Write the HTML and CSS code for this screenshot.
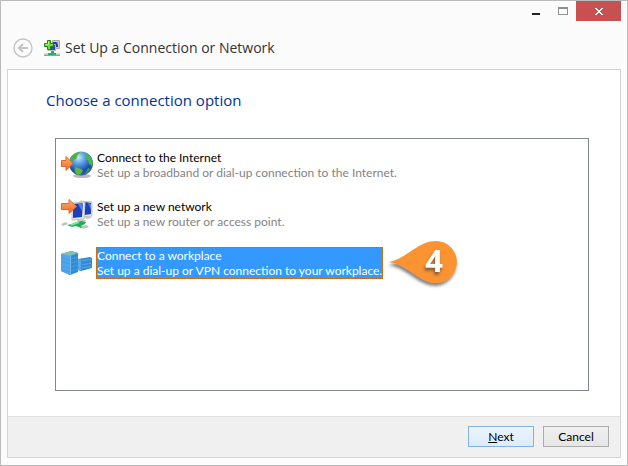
FILE: index.html
```html
<!DOCTYPE html>
<html lang="en">
<head>
<meta charset="utf-8">
<title>Set Up a Connection or Network</title>
<link rel="stylesheet" href="styles.css">
</head>
<body>
<div class="window">
  <div class="caption">
    <button class="cap minimize" aria-label="Minimize"><svg width="8" height="3"><path d="M0 0h8v2H0z" fill="#222"/></svg></button>
    <button class="cap maximize" aria-label="Maximize"><svg width="10" height="8"><path d="M0 0h10v8H0zM1 2v5h8V2z" fill="#909090" fill-rule="evenodd"/></svg></button>
    <button class="cap close" aria-label="Close"><svg width="8" height="7" shape-rendering="crispEdges"><path d="M0 0h2v1h1v1h2V1h1V0h2v1H7v1H6v1H5v1h1v1h1v1h1v1H6V6H5V5H3v1H2v1H0V6h1V5h1V4h1V3H2V2H1V1H0z" fill="#fff"/></svg></button>
  </div>
  <header class="title">
    <button class="back" aria-label="Back"><svg width="20" height="20" viewBox="0 0 20 20" fill="none" stroke="#c3c3c3"><circle cx="10" cy="10" r="9" stroke-width="1.4"/><path d="M15 10H6M10 6l-4 4 4 4" stroke-width="2"/></svg></button>
    <svg class="app-icon" width="16" height="16" viewBox="0 0 16 16">
      <path d="M8.500.500h7v8h-7z" fill="#c9d0cf" stroke="#a4a9a7"/>
      <path d="M9 2h5v5H9z" fill="#3037ae"/><path d="M12 2h2v3z" fill="#798ced"/>
      <path d="M4.500 4.500h7v6h-7z" fill="#304db5" stroke="#b5bdbb"/>
      <path d="M7 11h3v2h2v2H4v-2h3z" fill="#19b477"/><path d="M0 13.500h4v2H0zM12 13.500h4v2h-4z" fill="#b7c8bd"/><path d="M0 15h16v1H0z" fill="#62be91"/>
      <path d="M3.500.500h3v3h3v3h-3v3h-3v-3h-3v-3h3z" fill="#70e02c" stroke="#16851c"/><path d="M4.500 1.500v3h-3" fill="none" stroke="#b6f566"/>
    </svg>
    <h1>Set Up a Connection or Network</h1>
  </header>
  <main class="client">
    <section class="content">
      <h2>Choose a connection option</h2>
      <div class="options">
        <button class="option">
          <svg width="32" height="28" viewBox="0 0 32 28">
            <defs>
              <radialGradient id="sea" cx=".4" cy=".25" r=".75"><stop offset="0" stop-color="#c5ebff"/><stop offset=".35" stop-color="#5b9fe8"/><stop offset=".75" stop-color="#1d4cb0"/><stop offset="1" stop-color="#2f62a8"/></radialGradient>
              <linearGradient id="arrow" x2="0" y2="1"><stop offset="0" stop-color="#ffb079"/><stop offset="1" stop-color="#f06418"/></linearGradient>
            </defs>
            <ellipse cx="21" cy="25" rx="9" ry="2" fill="#bbb"/>
            <circle cx="20" cy="12.500" r="12" fill="url(#sea)"/>
            <path d="M9 8c2-4 5-6 9-7l2 2-3 1-1 3-3 2-2 3z" fill="#4caf45"/>
            <path d="M24 2c4 1 7 5 8 9l-1 4-3-2-1-4-3-3z" fill="#4cb844"/>
            <path d="M14 16l4 1 4 2-2 4-3 1c-3-2-4-4-3-8z" fill="#5ab83b"/>
            <path d="M27 17l2 1-3 4-2 1z" fill="#3f9c4b"/>
            <path d="M17 3l3-1-3 4-2 1z" fill="#a6dc77"/>
            <path d="M.500 9.500H5v-4l7 7-7 7v-4H.500z" fill="url(#arrow)" stroke="#d96a35"/>
          </svg>
          <span class="text"><span class="name">Connect to the Internet</span><span class="detail">Set up a broadband or dial-up connection to the Internet.</span></span>
        </button>
        <button class="option">
          <svg width="32" height="30" viewBox="0 0 32 30">
            <path d="M19 2l12 1v14l-9 1z" fill="#e2e4e1" stroke="#c0c4be"/><path d="M24 3l6 1v11l-6 1z" fill="#1a40c0"/><path d="M27 4l3 1v6z" fill="#5880ea"/>
            <path d="M11 4l13-1-1 17-12 1z" fill="#e8eae7" stroke="#bcc0ba"/><path d="M12 5l10-1-1 14-9 1z" fill="#1a40bd"/><path d="M17 5l5-1-1 8z" fill="#557fea"/>
            <path d="M16 21l5-1 5 2-8 2zM24 18l4-1 3 2-6 1z" fill="#c5c9c4"/>
            <path d="M6 26l5-1 6-2 3-1 5 1-1 2-4 2 3 1-3 1-5-2-4 1z" fill="#21ad5a"/>
            <path d="M0 25l5-2 2 2-5 2zM20 27l6-1 2 2-6 2z" fill="#bdc5bd"/><path d="M10 26l8-3" stroke="#80df9c" stroke-width="2"/>
            <path d="M.500 4.500H8v-4l7.500 7L8 14.500v-4H.500z" fill="url(#arrow)" stroke="#d96a35"/>
          </svg>
          <span class="text"><span class="name">Set up a new network</span><span class="detail">Set up a new router or access point.</span></span>
        </button>
        <button class="option selected">
          <svg width="32" height="26" viewBox="0 0 32 26">
            <path d="M17 9l12-2 2 1v10l-11 3-3-1z" fill="#348bd1"/><path d="M17 9l3 1v11l-3-1z" fill="#57abed"/>
            <path d="M21 10l9-1v1l-9 1zM21 14l9-1v1l-9 1zM21 17l9-1v1l-9 1z" fill="#57a8e4"/>
            <path d="M0 4l10-3 7 2v19l-8 3-9-4z" fill="#318bd5"/><path d="M0 4l9 2v19l-9-4z" fill="#4fa6ea"/><path d="M0 4l10-3 7 2-8 3z" fill="#7fc0b0"/>
            <path d="M1 8l8 2M1 12l8 2M1 16l8 2M1 20l8 2" stroke="#419bde" stroke-width=".6"/>
            <path d="M10 9l7-2M10 13l7-2M10 17l7-2M10 21l7-2" stroke="#53a7e5" stroke-width=".6"/>
            <path d="M9.500 6v18" stroke="#70b8ee"/>
          </svg>
          <span class="text"><span class="name">Connect to a workplace</span><span class="detail">Set up a dial-up or VPN connection to your workplace.</span></span>
          <svg class="callout" width="80" height="60" viewBox="0 0 80 60" role="img" aria-label="Step 4">
            <defs><filter id="shadow" x="-20%" y="-20%" width="150%" height="160%"><feDropShadow dx="-1" dy="3" stdDeviation="1.500" flood-color="#333" flood-opacity=".6"/></filter></defs>
            <path d="M3 28C22 24 32 7 50 7a21 21 0 0 1 0 42C34 49 22 31 3 28z" fill="#fb9331" filter="url(#shadow)"/>
            <text class="step" x="48" y="38" text-anchor="middle" filter="url(#shadow)">4</text>
          </svg>
        </button>
      </div>
    </section>
    <footer class="actions">
      <button class="action primary"><u>N</u>ext</button>
      <button class="action">Cancel</button>
    </footer>
  </main>
</div>
</body>
</html>
```
FILE: styles.css
```css
* { box-sizing: border-box; }
body {
  margin: 0;
  font: 12px/15px Lato, "Open Sans", sans-serif;
  color: #000;
}
button { font: inherit; color: inherit; margin: 0; padding: 0; border: 0; background: none; }
svg { display: block; flex: none; }
.window {
  display: flex;
  flex-direction: column;
  min-height: 100vh;
  padding: 0 6px 7px;
  border: 1px solid #bbb;
  background: #fbfbfb;
}
.caption { display: flex; justify-content: flex-end; height: 20px; }
.cap { display: flex; align-items: center; justify-content: center; width: 27px; }
.minimize { align-items: flex-end; padding-bottom: 5px; }
.close { width: 45px; background: #c75050; }
.title { display: flex; align-items: center; height: 48px; padding: 6px 6px 0; }
.back { margin-right: 11px; }
.app-icon { margin-right: 5px; }
h1, h2 { font-family: "Open Sans", sans-serif; font-weight: 400; line-height: 20px; }
h1 { margin: 0; font-size: 14px; color: #333; }
.client {
  display: flex;
  flex: 1;
  flex-direction: column;
  border: 1px solid #d4d4d4;
  background: #fff;
}
.content { display: flex; flex: 1; flex-direction: column; padding: 20px 31px 25px 47px; }
h2 { margin: 0 0 28px -9px; font-size: 15px; color: #003399; }
.options {
  display: flex;
  flex: 1;
  flex-direction: column;
  align-items: flex-start;
  gap: 19px;
  padding: 11px 5px;
  border: 1px solid #828790;
}
.option { position: relative; display: flex; align-items: center; gap: 4px; height: 30px; text-align: left; }
.text { display: flex; flex-direction: column; white-space: nowrap; }
.detail { color: #838383; }
.selected .text { margin: -1px; border: 1px dotted #cc6600; background: #3399ff; color: #fff; }
.selected .detail { color: #fff; }
.callout { position: absolute; left: 100%; top: -14px; margin-left: 4px; }
.step { font: bold 31px "Open Sans", sans-serif; fill: #fff; }
.actions {
  display: flex;
  justify-content: flex-end;
  gap: 9px;
  padding: 9px 11px 10px;
  border-top: 1px solid #dfdfdf;
  background: #f0f0f0;
}
.action { width: 66px; height: 21px; border: 1px solid #acacac; background: linear-gradient(#f0f0f0, #e5e5e5); }
.primary { border-color: #7eb4ea; background: linear-gradient(#ecf4fc, #dcecfc); }
```
